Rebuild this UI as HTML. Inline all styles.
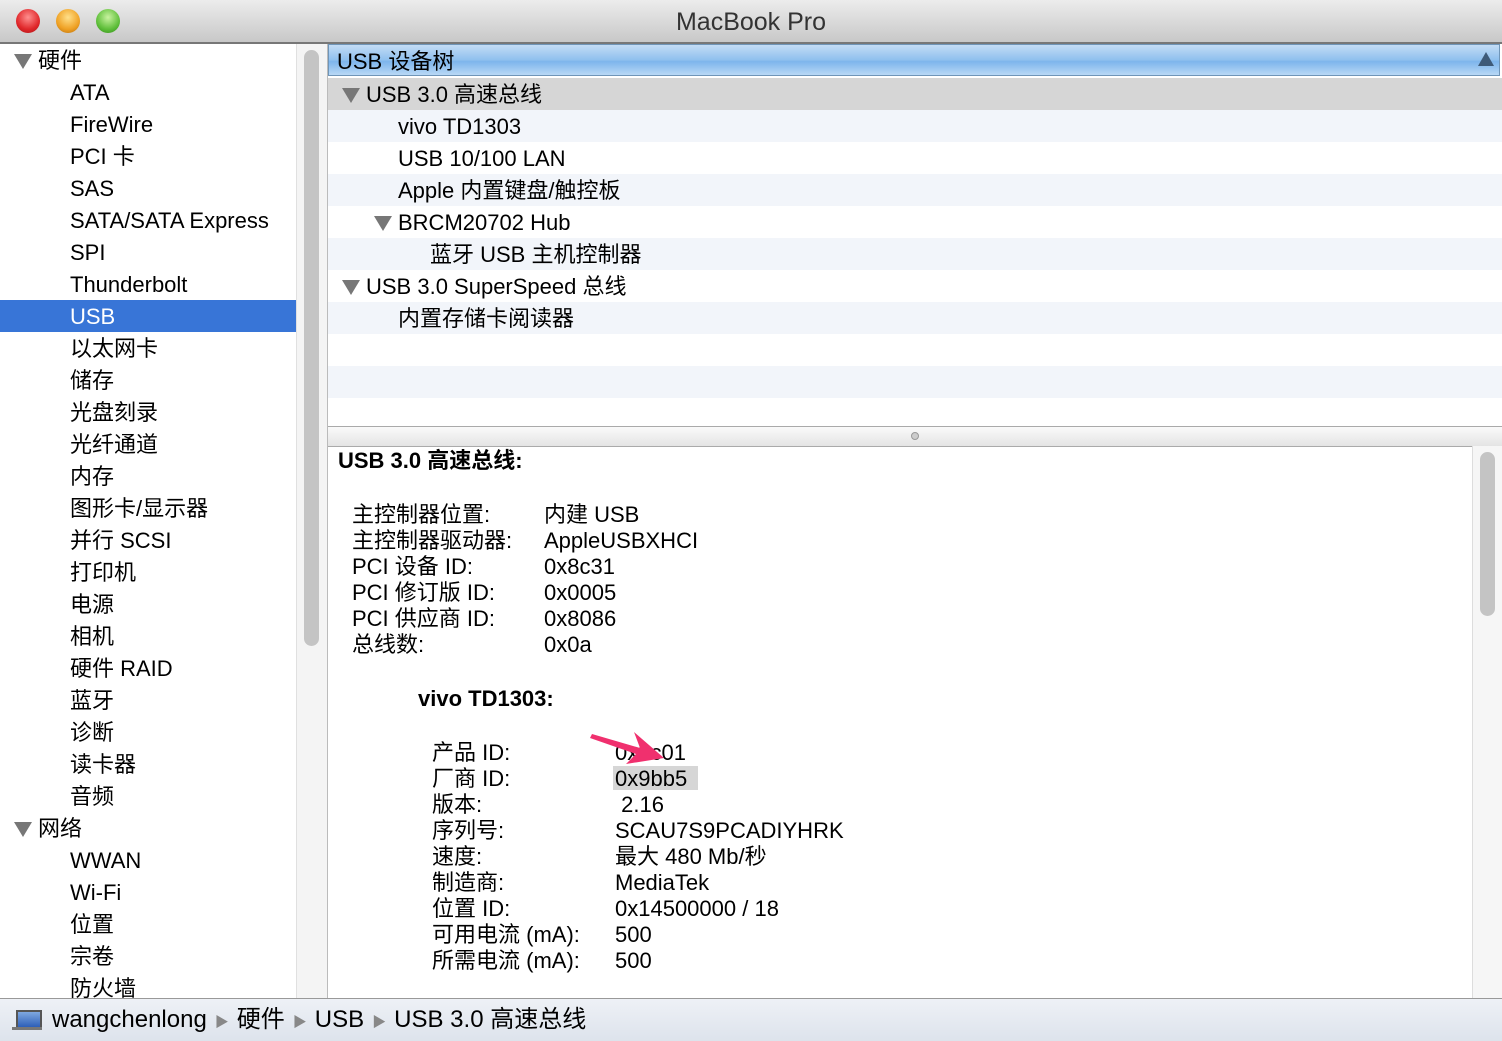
<!DOCTYPE html><html><head><meta charset="utf-8"><style>
body{margin:0;width:1502px;height:1040px;overflow:hidden;background:#fff;font-family:"Liberation Sans","Noto Sans CJK SC",sans-serif;font-size:22px;color:#000;position:relative}
.a{position:absolute;white-space:nowrap}
.title{left:0;top:0;width:1502px;height:42px;background:linear-gradient(#ececec,#c8c8c8);border-bottom:2px solid #777}
.dot{position:absolute;top:9px;width:24px;height:24px;border-radius:50%}
.side div{position:absolute;left:70px;height:32px;line-height:34px}
.tri{display:inline-block;width:0;height:0;border-left:9px solid transparent;border-right:9px solid transparent;border-top:15px solid #777;margin-right:6px;vertical-align:-1px}
.row{position:absolute;left:328px;width:1174px;height:32px;line-height:34px}
.d{position:absolute;line-height:26px}
.sep{color:#888;font-size:14px;margin:0 8px}
</style></head><body>
<div class="a title"></div>
<div class="dot" style="left:16px;background:radial-gradient(circle at 50% 35%,#ff8f8f,#e0272a 60%,#a51214)"></div>
<div class="dot" style="left:56px;background:radial-gradient(circle at 50% 35%,#ffe08a,#efa124 60%,#b46c0c)"></div>
<div class="dot" style="left:96px;background:radial-gradient(circle at 50% 35%,#c9f3a0,#5fbf3a 60%,#2f8a18)"></div>
<div class="a" style="left:0;width:1502px;top:8px;text-align:center;font-size:25px;color:#333">MacBook Pro</div>

<div class="side">
<div style="left:14px;top:44px"><span class="tri"></span>硬件</div>
<div style="top:76px">ATA</div><div style="top:108px">FireWire</div><div style="top:140px">PCI 卡</div><div style="top:172px">SAS</div><div style="top:204px">SATA/SATA Express</div><div style="top:236px">SPI</div><div style="top:268px">Thunderbolt</div>
<div style="left:0;width:226px;padding-left:70px;top:300px;background:#3875d7;color:#fff">USB</div>
<div style="top:332px">以太网卡</div><div style="top:364px">储存</div><div style="top:396px">光盘刻录</div><div style="top:428px">光纤通道</div><div style="top:460px">内存</div><div style="top:492px">图形卡/显示器</div><div style="top:524px">并行 SCSI</div><div style="top:556px">打印机</div><div style="top:588px">电源</div><div style="top:620px">相机</div><div style="top:652px">硬件 RAID</div><div style="top:684px">蓝牙</div><div style="top:716px">诊断</div><div style="top:748px">读卡器</div><div style="top:780px">音频</div>
<div style="left:14px;top:812px"><span class="tri"></span>网络</div>
<div style="top:844px">WWAN</div><div style="top:876px">Wi-Fi</div><div style="top:908px">位置</div><div style="top:940px">宗卷</div><div style="top:972px">防火墙</div>
</div>
<div class="a" style="left:296px;top:44px;width:30px;height:954px;background:#f4f4f4;border-left:1px solid #e0e0e0;border-right:1px solid #bbb"></div>
<div class="a" style="left:304px;top:50px;width:15px;height:596px;background:#c4c4c4;border-radius:8px"></div>

<div class="a" style="left:328px;top:44px;width:1172px;height:32px;line-height:33px;background:linear-gradient(#c3dcf5,#8fc0ee 50%,#7db5ec 55%,#b8d8f5);border:1px solid #6f95b8;padding-left:8px;box-sizing:border-box">USB 设备树</div>
<div class="a" style="left:1478px;top:52px;width:0;height:0;border-left:8px solid transparent;border-right:8px solid transparent;border-bottom:14px solid #3e5a78"></div>
<div class="row" style="top:78px;background:#d6d6d6;padding-left:14px"><span class="tri"></span>USB 3.0 高速总线</div>
<div class="row" style="top:110px;background:#f2f5fa;padding-left:70px">vivo TD1303</div>
<div class="row" style="top:142px;padding-left:70px">USB 10/100 LAN</div>
<div class="row" style="top:174px;background:#f2f5fa;padding-left:70px">Apple 内置键盘/触控板</div>
<div class="row" style="top:206px;padding-left:46px"><span class="tri"></span>BRCM20702 Hub</div>
<div class="row" style="top:238px;background:#f2f5fa;padding-left:102px">蓝牙 USB 主机控制器</div>
<div class="row" style="top:270px;padding-left:14px"><span class="tri"></span>USB 3.0 SuperSpeed 总线</div>
<div class="row" style="top:302px;background:#f2f5fa;padding-left:70px">内置存储卡阅读器</div>
<div class="row" style="top:366px;background:#f2f5fa"></div>
<div class="a" style="left:328px;top:426px;width:1174px;height:19px;background:linear-gradient(#fafafa,#e4e4e4);border-top:1px solid #aaa;border-bottom:1px solid #aaa"></div>
<div class="a" style="left:911px;top:432px;width:6px;height:6px;border-radius:50%;background:#ccc;border:1px solid #999"></div>
<div class="a" style="left:1472px;top:446px;width:30px;height:552px;background:#f6f6f6;border-left:1px solid #ddd"></div>
<div class="a" style="left:1480px;top:452px;width:15px;height:164px;background:#c4c4c4;border-radius:8px"></div>

<div class="d" style="left:338px;top:448px;font-weight:bold">USB 3.0 高速总线:</div>
<div class="d" style="left:352px;top:502px">主控制器位置:<br>主控制器驱动器:<br>PCI 设备 ID:<br>PCI 修订版 ID:<br>PCI 供应商 ID:<br>总线数:</div>
<div class="d" style="left:544px;top:502px">内建 USB<br>AppleUSBXHCI<br>0x8c31<br>0x0005<br>0x8086<br>0x0a</div>
<div class="d" style="left:418px;top:686px;font-weight:bold">vivo TD1303:</div>
<div class="a" style="left:613px;top:766px;width:85px;height:24px;background:#d6d6d6"></div>
<div class="d" style="left:432px;top:740px">产品 ID:<br>厂商 ID:<br>版本:<br>序列号:<br>速度:<br>制造商:<br>位置 ID:<br>可用电流 (mA):<br>所需电流 (mA):</div>
<div class="d" style="left:615px;top:740px">0x2c01<br>0x9bb5<br>&nbsp;2.16<br>SCAU7S9PCADIYHRK<br>最大 480 Mb/秒<br>MediaTek<br>0x14500000 / 18<br>500<br>500</div>
<svg class="a" style="left:588px;top:726px" width="80" height="40"><path d="M4 8 L52 22 L46 6 L76 32 L38 38 L48 28 L2 12Z" fill="#f0306e"/></svg>

<div class="a" style="left:0;top:998px;width:1502px;height:42px;background:linear-gradient(#eef1f6,#dde3ec);border-top:1px solid #999"></div>
<div class="a" style="left:16px;top:1010px;width:22px;height:15px;background:linear-gradient(#7fa8e0,#2d5fb8);border:2px solid #555"></div>
<div class="a" style="left:12px;top:1027px;width:30px;height:3px;background:#777"></div>
<div class="a" style="left:52px;top:1005px;line-height:30px;font-size:24px">wangchenlong<span class="sep">▶</span>硬件<span class="sep">▶</span>USB<span class="sep">▶</span>USB 3.0 高速总线</div>
</body></html>
